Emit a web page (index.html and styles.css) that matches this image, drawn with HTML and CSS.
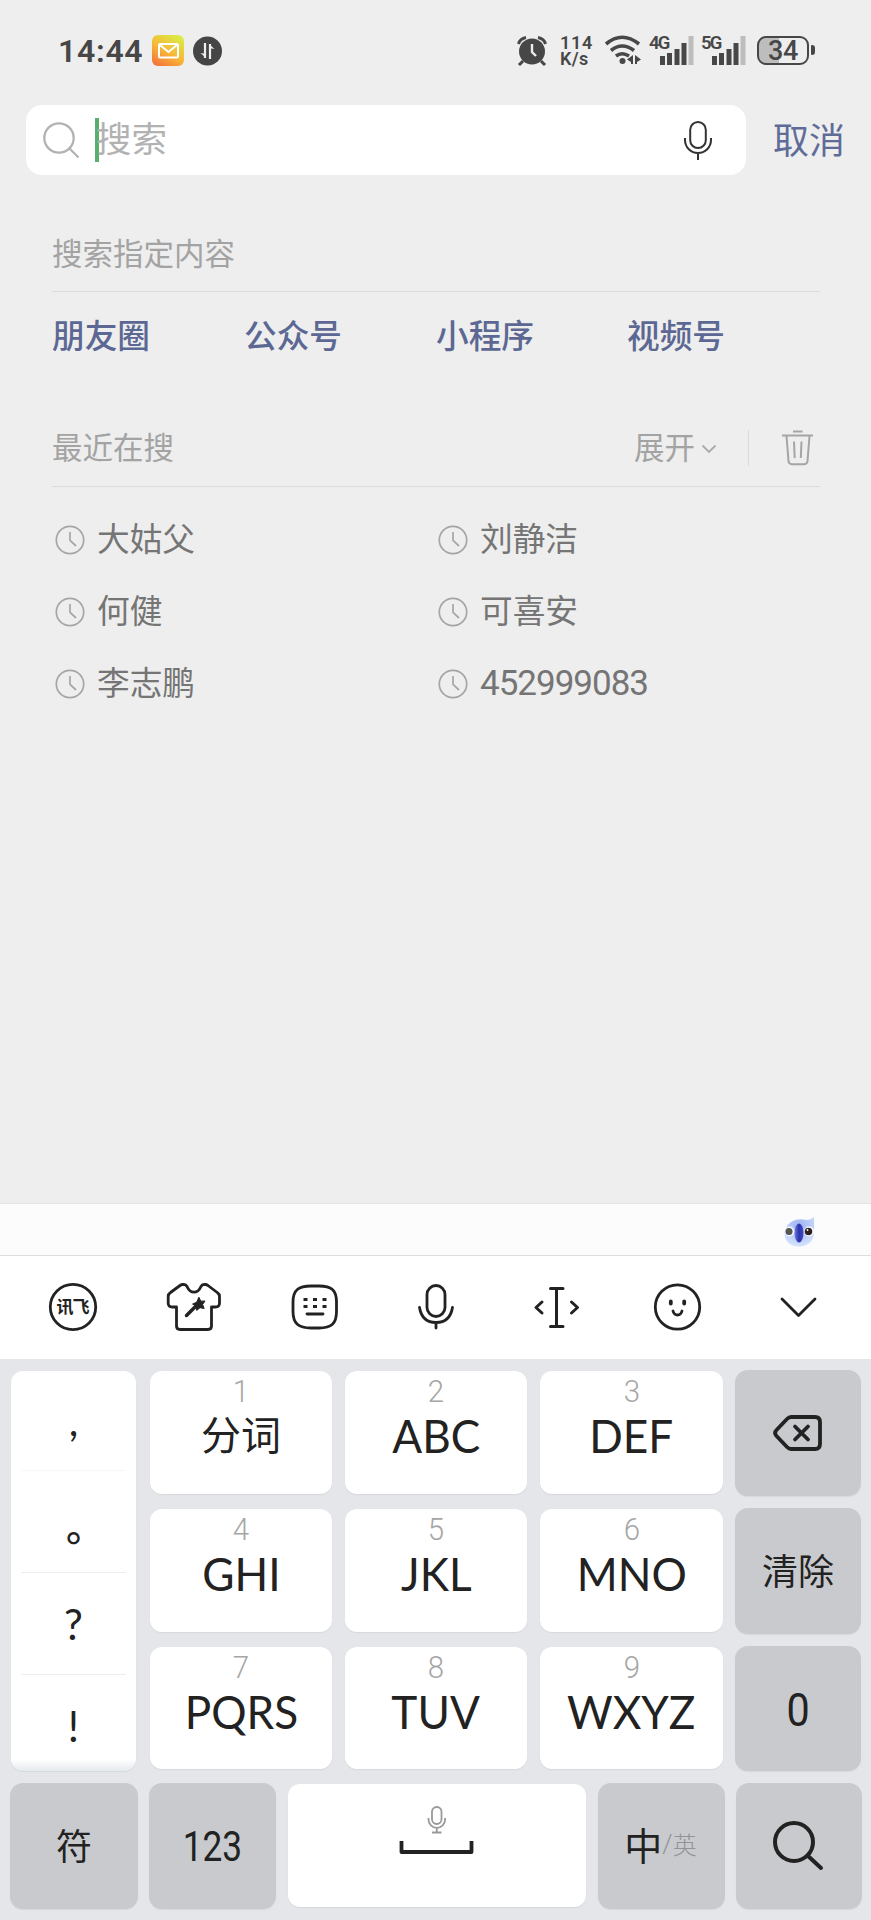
FILE: index.html
```html
<!DOCTYPE html>
<html lang="zh-CN">
<head>
<meta charset="utf-8">
<title>搜索</title>
<link rel="stylesheet" href="styles.css">
</head>
<body>
<div class="phone">
  <header class="status">
    <span class="time">14:44</span>
    <svg class="mail" width="32" height="32" viewBox="0 0 32 32">
      <defs><linearGradient id="mailbg" x1=".2" y1="1" x2=".8" y2="0"><stop offset="0" stop-color="#f2763a"/><stop offset=".45" stop-color="#f8b637"/><stop offset="1" stop-color="#d9ee45"/></linearGradient></defs>
      <rect width="32" height="31" rx="6" fill="url(#mailbg)"/>
      <rect x="7" y="9" width="19" height="13.500" rx="1" fill="none" stroke="#fff" stroke-width="2"/>
      <path d="M8 10l8.500 7L25 10" fill="none" stroke="#fff" stroke-width="2"/>
    </svg>
    <svg class="sync" width="30" height="30" viewBox="0 0 30 30">
      <circle cx="14.500" cy="15" r="14.500" fill="#454545"/>
      <path d="M12 7v15M17 23V8" fill="none" stroke="#eee" stroke-width="2.200"/><path d="M7.500 17l5.500 1v4zM21.500 13l-5.500-1V8z" fill="#eee"/>
    </svg>
    <svg class="alarm" width="30" height="30" viewBox="0 0 30 30">
      <circle cx="15" cy="15.500" r="13" fill="#474747"/>
      <path d="M1.500 8Q3 2.500 9 1.500M28.500 8Q27 2.500 21 1.500" fill="none" stroke="#474747" stroke-width="3"/>
      <path d="M6 25l-4 4M24 25l4 4" stroke="#474747" stroke-width="3"/>
      <path d="M15 8v8l4 4" fill="none" stroke="#eee" stroke-width="2.400"/>
    </svg>
    <span class="speed"><b>114</b><b class="unit">K/s</b></span>
    <svg class="wifi" width="38" height="30" viewBox="0 0 38 30">
      <g fill="none" stroke="#474747" stroke-width="3.600"><path d="M2 9Q18 -4.500 35 9"/><path d="M7 15.500Q18 6.500 30 15.500"/><path d="M12 21Q18 16.500 25 21"/></g>
      <circle cx="18.500" cy="26" r="3" fill="#474747"/>
      <path d="M29 20v9h-2v-2l-4-2.500zM31 20v9h2v-2l4-2.500z" fill="#474747"/>
    </svg>
    <span class="signal"><b>4G</b><svg width="34" height="30" viewBox="0 0 34 30"><path d="M0 20h5v9H0zM7 17h5v12H7zM14.500 13h5v16h-5zM21.500 7h5v22h-5z" fill="#474747"/><path d="M28.500 0h5v29h-5z" fill="#bdbdbd"/></svg></span>
    <span class="signal second"><b>5G</b><svg width="34" height="30" viewBox="0 0 34 30"><path d="M0 20h5v9H0zM7 17h5v12H7zM14.500 13h5v16h-5zM21.500 7h5v22h-5z" fill="#474747"/><path d="M28.500 0h5v29h-5z" fill="#bdbdbd"/></svg></span>
    <span class="battery"><b>34</b></span><i class="tip"></i>
  </header>

  <div class="searchbar">
    <div class="field">
      <svg class="glass" width="38" height="38" viewBox="0 0 38 38" fill="none" stroke="#b2b2b2" stroke-width="2.300"><circle cx="17" cy="17" r="14.700"/><path d="M27.500 27.500l9 9"/></svg>
      <i class="caret"></i><span class="placeholder">搜索</span>
      <svg class="mic" width="30" height="40" viewBox="0 0 30 40" fill="none" stroke="#333" stroke-width="2"><rect x="7.200" y="2" width="15.600" height="26" rx="7.800"/><path d="M2 18v2a13 13 0 0 0 26 0v-2M15 33v7"/></svg>
    </div>
    <span class="cancel">取消</span>
  </div>

  <main class="content">
    <section>
      <div class="head">搜索指定内容</div>
      <nav class="scopes"><a>朋友圈</a><a>公众号</a><a>小程序</a><a>视频号</a></nav>
    </section>
    <section class="recent">
      <div class="head"><span>最近在搜</span><span class="expand">展开</span>
        <svg class="chev" width="16" height="10" viewBox="0 0 16 10" fill="none" stroke="#aaa" stroke-width="1.800"><path d="M1.500 1.500L8 8l6.500-6.500"/></svg>
        <i class="sep"></i>
        <svg class="trash" width="32" height="36" viewBox="0 0 32 36" fill="none" stroke="#a5a5a5" stroke-width="2"><path d="M0 5.500h31M11 1.500h9.500M4.500 6l2 25q.2 3.200 3.500 3.200h12q3.300 0 3.500-3.200l2-25M12 11.500l.7 16.500M19.500 11.500l-.7 16.500"/></svg>
      </div>
      <div class="history">
        <div><svg class="clock" viewBox="0 0 30 30"><circle cx="15" cy="15" r="13.700"/><path d="M15 7v8.500l6 5.500"/></svg><span>大姑父</span></div>
        <div><svg class="clock" viewBox="0 0 30 30"><circle cx="15" cy="15" r="13.700"/><path d="M15 7v8.500l6 5.500"/></svg><span>刘静洁</span></div>
        <div><svg class="clock" viewBox="0 0 30 30"><circle cx="15" cy="15" r="13.700"/><path d="M15 7v8.500l6 5.500"/></svg><span>何健</span></div>
        <div><svg class="clock" viewBox="0 0 30 30"><circle cx="15" cy="15" r="13.700"/><path d="M15 7v8.500l6 5.500"/></svg><span>可喜安</span></div>
        <div><svg class="clock" viewBox="0 0 30 30"><circle cx="15" cy="15" r="13.700"/><path d="M15 7v8.500l6 5.500"/></svg><span>李志鹏</span></div>
        <div><svg class="clock" viewBox="0 0 30 30"><circle cx="15" cy="15" r="13.700"/><path d="M15 7v8.500l6 5.500"/></svg><span class="num">452999083</span></div>
      </div>
    </section>
  </main>

  <div class="ime">
    <div class="strip">
      <svg width="32" height="32" viewBox="0 0 32 32">
        <defs><radialGradient id="face" cx=".5" cy=".3" r=".75"><stop offset="0" stop-color="#9fb2f4"/><stop offset=".6" stop-color="#c0d0fa"/><stop offset="1" stop-color="#d9e8fd"/></radialGradient><linearGradient id="nose"><stop offset="0" stop-color="#6a7ce0"/><stop offset=".5" stop-color="#2b34a8"/><stop offset="1" stop-color="#3f4cc8"/></linearGradient></defs>
        <path d="M31 0q-3 3-8 3Q18 1.500 12 3 2 6.500 1.500 17 2.500 29 16 29.500 30 29 31 16 31.500 8 31 0z" fill="url(#face)"/>
        <circle cx="6.500" cy="14.500" r="5" fill="#f3f5fb"/><circle cx="6" cy="14.500" r="3.500" fill="#555"/>
        <circle cx="26" cy="14.500" r="5" fill="#fff"/><circle cx="25.500" cy="14.500" r="3.800" fill="#2c2220"/>
        <circle cx="24.500" cy="13" r=".9" fill="#fff"/>
        <ellipse cx="16" cy="16" rx="4.500" ry="9.500" fill="url(#nose)"/>
      </svg>
    </div>
    <div class="tools">
      <svg viewBox="0 0 60 60"><circle cx="30" cy="30" r="22.700"/><text x="29.500" y="36" text-anchor="middle" class="brand">讯飞</text></svg>
      <svg viewBox="0 0 60 60"><path d="M20 7.500h-1.500q-1 0-2.500 1L6.500 15.500Q4.200 17 4.200 19.500V26q0 4 4 4H12.500v19q0 3.500 3.500 3.500h28q3.500 0 3.500-3.500V30h4q4 0 4-4v-6.500q0-2.500-2.300-4L44 8.500q-1.500-1-2.500-1H40q-2 0-3 2-2.500 5.700-7 5.700T23 9.500q-1-2-3-2z"/><path d="M22.500 38.500l9-9" stroke-width="3.500"/><path d="M35 20.500l1.800 3.700 4.200-.2-2.400 3.500 1.600 4-4.200-.8-3.300 2.700-.4-4.300-3.700-2 3.900-1.800z" fill="#222" stroke-width="1"/></svg>
      <svg viewBox="0 0 60 60"><path d="M30 9h4c12.500 0 17.500 4 17.500 16v9.500c0 12-5 16.500-17.500 16.500h-8C13.500 51 8 46.500 8 34.500V25C8 13 13.500 9 26 9z"/><path d="M18.500 22.500h4M28 22.500h4M37.500 22.500h4M18.500 29.500h4M28 29.500h4M37.500 29.500h4" stroke-width="3.200" stroke-linecap="butt"/><path d="M22 37h16"/></svg>
      <svg viewBox="0 0 60 60"><rect x="21" y="8.500" width="18" height="31" rx="9"/><path d="M13.500 30.500q2.500 15 16.500 15t16.500-15M30 46v5"/></svg>
      <svg viewBox="0 0 60 60"><path d="M29.500 11.500v38M23.500 11.500H36M23.500 49.500H36M15 25L9 30.500l6 5.500M44.500 25l6 5.500-6 5.500" stroke-width="3"/></svg>
      <svg viewBox="0 0 60 60"><circle cx="29.500" cy="30" r="22.200"/><path d="M22.800 24.500v2M36.200 24.500v2" stroke-width="3.800"/><path d="M25 34q1 4 4.500 4t4.500-4"/></svg>
      <svg viewBox="0 0 60 60"><path d="M13 22l16.500 16.500L46 22"/></svg>
    </div>
    <div class="keyboard">
      <div class="punct"><span class="comma">,</span><span class="stop">。</span><span>?</span><span>!</span></div>
      <div class="key"><small>1</small><span class="han">分词</span></div>
      <div class="key"><small>2</small><span>ABC</span></div>
      <div class="key"><small>3</small><span>DEF</span></div>
      <div class="fn"><svg width="50" height="38" viewBox="0 0 50 38" fill="none" stroke="#222" stroke-width="3.800" stroke-linejoin="round" stroke-linecap="round"><path d="M18 3h24q5 0 5 5v22q0 5-5 5H18q-2 0-4-2L3.500 22q-3-3 0-6L14 5q2-2 4-2zM22 12.500l13 13M35 12.500l-13 13"/></svg></div>
      <div class="key"><small>4</small><span>GHI</span></div>
      <div class="key"><small>5</small><span>JKL</span></div>
      <div class="key"><small>6</small><span>MNO</span></div>
      <div class="fn raised">清除</div>
      <div class="key"><small>7</small><span>PQRS</span></div>
      <div class="key"><small>8</small><span>TUV</span></div>
      <div class="key"><small>9</small><span>WXYZ</span></div>
      <div class="fn zero"><span>0</span></div>
      <div class="bottom">
        <div class="fn raised">符</div>
        <div class="fn digits"><span>123</span></div>
        <div class="key space">
          <svg width="76" height="50" viewBox="0 0 76 50" fill="none"><g stroke="#999" stroke-width="1.800"><rect x="33" y="2" width="9.500" height="17" rx="4.700"/><path d="M29.500 13v1.500a8.300 8.300 0 0 0 16.600 0V13M37.800 23v4.500M33 27.500h9.500"/></g><path d="M2.500 36v11h70V36" stroke="#222" stroke-width="3.800" stroke-linejoin="round"/></svg>
        </div>
        <div class="fn lang"><span>中</span><small><i>/</i>英</small></div>
        <div class="fn"><svg width="52" height="52" viewBox="0 0 52 52" fill="none" stroke="#222" stroke-width="4" stroke-linecap="round"><circle cx="21" cy="22" r="19"/><path d="M34.500 35.500L48 48"/></svg></div>
      </div>
    </div>
  </div>
</div>
</body>
</html>
```
FILE: styles.css
```css
* { box-sizing: border-box; }
body { margin: 0; }
i { font-style: normal; }
svg { display: block; flex: none; }
.phone {
  width: 871px; height: 1920px; display: flex; flex-direction: column;
  background: #eee; overflow: hidden; white-space: nowrap;
  font-family: Roboto, "Noto Sans CJK SC", sans-serif;
}

/* status bar */
.status { height: 105px; display: flex; padding: 35px 0 0 58px; color: #474747; }
.time { width: 94px; font-size: 32px; line-height: 32px; font-weight: 600; letter-spacing: .7px; }
.sync { margin: 1px 0 0 9px; }
.alarm { margin: 1px 0 0 294px; }
.speed { width: 34px; margin: 0 0 0 13px; display: flex; flex-direction: column; font-size: 18px; line-height: 16px; letter-spacing: .7px; }
.speed b { font-weight: 600; height: 16px; }
.speed .unit { letter-spacing: .4px; }
.wifi { margin-left: 10px; }
.signal { width: 44px; height: 30px; margin: 1px 0 0 7px; display: flex; }
.signal b { width: 11px; overflow: visible; font-size: 18.500px; line-height: 15px; font-weight: 600; letter-spacing: -1.700px; }
.signal.second { margin-left: 8px; }
.battery { width: 52px; height: 29px; margin: 1px 0 0 12px; border: 2.500px solid #474747; border-radius: 9px; text-align: center; background: linear-gradient(90deg, #bdbdbd 20px, transparent 20px); }
.battery b { display: block; font-size: 27px; line-height: 26px; font-weight: 500; letter-spacing: -.4px; }
.tip { width: 4px; height: 10px; margin: 10px 0 0 2px; background: #474747; border-radius: 1px 3px 3px 1px; }

/* search */
.searchbar { height: 70px; display: flex; padding-left: 26px; align-items: center; }
.field { width: 720px; height: 70px; padding: 0 33px 0 16px; display: flex; align-items: center; background: #fff; border-radius: 16px; }
.caret { width: 4px; height: 44px; margin-left: 15px; background: #56b06c; }
.placeholder { margin: 0 0 0 -3px; font-size: 35.500px; line-height: 50px; color: #b2b2b2; }
.mic { margin-left: auto; }
.cancel { margin: 4px 0 0 27px; font-size: 36px; line-height: 50px; color: #5f6c98; }

.content { padding: 0 51px 0 52px; flex: 1; }
.head { height: 117px; padding-top: 58px; display: flex; border-bottom: 1px solid #dcdcdc; font-size: 30.500px; line-height: 44px; color: #a3a3a3; }
.scopes { display: grid; grid-template-columns: 192px 192px 191px 190px; padding-top: 21px; font-size: 32.700px; line-height: 49px; font-weight: 500; color: #5c6893; }
.recent .head { height: 125px; padding-top: 65px; }
.expand { margin-left: 460px; }
.chev { margin: 17px 0 0 6px; }
.sep { width: 1px; height: 36px; margin: 3px 33px 0 31px; background: #d9d9d9; }
.trash { margin-top: 3px; }
.history { display: grid; grid-template-columns: 383px 1fr; grid-auto-rows: 72px; padding-top: 16px; font-size: 32.700px; color: #757575; }
.history div { display: flex; align-items: center; line-height: 48px; }
.history span { padding-top: 2px; }
.clock { width: 30px; height: 30px; margin: 1px 12px 0 3px; fill: none; stroke: #a5a5a5; stroke-width: 1.700; }
.history .num { font-size: 35px; letter-spacing: -1px; }

/* input method */
.ime { height: 717px; color: #222; }
.strip { height: 53px; background: #fcfcfc; border-top: 1px solid #e4e4e4; border-bottom: 1px solid #dedede; padding: 13px 0 0 783px; }
.tools { height: 103px; display: grid; grid-template-columns: repeat(7, 121px); padding: 0 0 2px 12px; justify-items: center; align-items: center; background: #fff; }
.tools svg { width: 60px; height: 60px; fill: none; stroke: #222; stroke-width: 2.800; stroke-linecap: round; stroke-linejoin: round; }
.tools .brand { font-size: 17px; font-weight: 700; fill: #222; stroke: none; letter-spacing: -1px; }
.keyboard {
  height: 561px; padding: 11px 10px; background: #e4e6e9;
  display: grid; gap: 12px 11px;
  grid-template-columns: 128px 184px 184px 185px 126px; grid-template-rows: 126px 126px 125px 126px;
}
.punct { grid-row: 1 / 4; margin: 1px 2px 0 1px; padding: 0 10px; display: grid; grid-template-rows: 100px 102px 102px 1fr; border-radius: 12px; background: linear-gradient(#fff 388px, #e5eaee); font-family: Lato, sans-serif; font-size: 42px; text-align: center; box-shadow: 0 1px 1px #d4d7da; }
.punct span { display: block; line-height: 103px; border-bottom: 1px solid #eee; }
.punct span:last-child { border: 0; }
.punct .comma { border-color: #f7f7f7; line-height: 99px; }
.punct .stop { font-family: "Noto Sans CJK SC", sans-serif; font-size: 39px; font-weight: 500; padding-left: 24px; line-height: 106px; }
.key { margin: 1px 1px 2px; display: flex; flex-direction: column; align-items: center; background: #fff; border-radius: 12px; box-shadow: 0 1px 1px #d6d8db; }
.key small { font-size: 32px; line-height: 41px; font-weight: 300; color: #a6a6a6; transform: scaleX(.92); }
.key span { font-family: Lato, "Noto Sans CJK SC", sans-serif; font-size: 45.500px; line-height: 47px; transform: scaleX(.97); }
.key .han { font-size: 40px; transform: none; }
.fn { display: flex; align-items: center; justify-content: center; background: #c9cace; border-radius: 13px; font-size: 36px; box-shadow: 0 1px 1px #d6d8db; }
.raised { padding-bottom: 4px; }
.zero { font-size: 47px; }
.zero span { transform: scaleX(.88); padding-top: 1px; }
.bottom { grid-column: 1 / 6; display: grid; gap: 11px; grid-template-columns: 128px 127px 300px 127px 126px; }
.digits span { font-size: 42px; transform: scaleX(.84); }
.space { padding-top: 21px; }
.lang { padding: 0 2px 5px 0; }
.lang span { font-size: 38px; }
.lang small { font-size: 24px; color: #929396; font-weight: 300; display: flex; align-items: center; }
.lang i { font-size: 26px; }
```
